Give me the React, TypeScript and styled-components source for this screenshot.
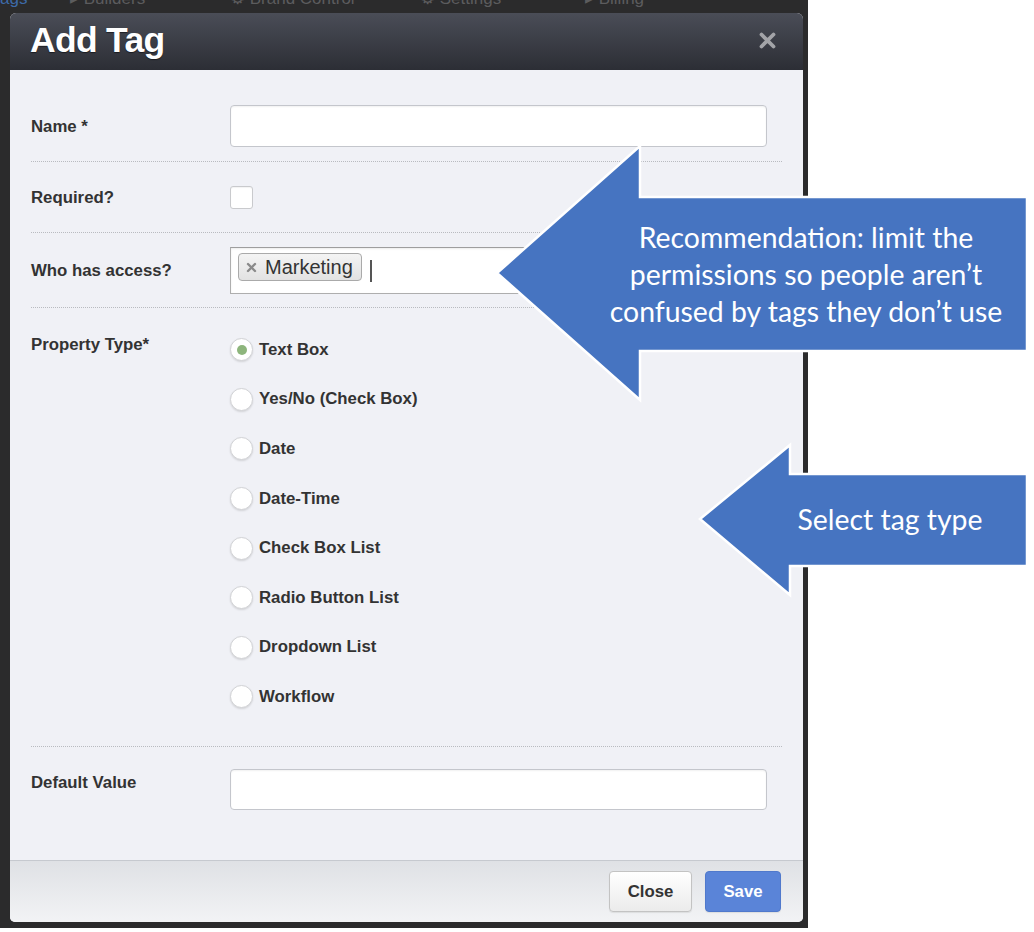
import React from "react";
import styled, { createGlobalStyle } from "styled-components";

const Global = createGlobalStyle`
  html, body { margin: 0; padding: 0; background: #ffffff; }
  body { font-family: "Liberation Sans", Arial, sans-serif; }
  * { box-sizing: border-box; }
`;

const Page = styled.div`
  position: relative;
  width: 1034px;
  height: 932px;
  background: #ffffff;
  overflow: hidden;
`;

const Frame = styled.div`
  width: 808px;
  height: 928px;
  background: #2b2b2c;
  display: flex;
  flex-direction: column;
`;

const NavStrip = styled.div`
  height: 13px;
  overflow: hidden;
`;

const NavRow = styled.div`
  display: flex;
  align-items: center;
  margin-top: -11px;
  height: 20px;
`;

const NavItem = styled.span<{ $w: number; $blue?: boolean }>`
  width: ${(p) => p.$w}px;
  font-size: 17px;
  line-height: 20px;
  color: ${(p) => (p.$blue ? "#3d6aa8" : "#5c5c5e")};
  white-space: nowrap;
`;

const Modal = styled.div`
  margin: 0 5px 0 10px;
  height: 909px;
  border-radius: 6px 6px 5px 5px;
  overflow: hidden;
  display: flex;
  flex-direction: column;
  background: #f0f1f6;
`;

const Header = styled.div`
  height: 57px;
  flex: none;
  display: flex;
  align-items: center;
  justify-content: space-between;
  padding: 0 26px 0 20px;
  background: linear-gradient(#4a4d57, #2c2e35);
`;

const Title = styled.h1`
  margin: 0;
  margin-top: -3px;
  font-size: 35.5px;
  letter-spacing: -0.7px;
  font-weight: 700;
  color: #ffffff;
  text-shadow: 0 1px 1px rgba(0, 0, 0, 0.5);
`;

const CloseX = styled.svg`
  width: 19px;
  height: 19px;
  margin-top: -2px;
`;

const Body = styled.div`
  flex: 1;
  padding: 35px 21px 0;
`;

const Row = styled.div<{ $pad: string; $align?: string; $divider?: boolean }>`
  display: flex;
  align-items: ${(p) => p.$align ?? "center"};
  padding: ${(p) => p.$pad};
  border-bottom: ${(p) => (p.$divider === false ? "none" : "1px dotted #b9bbc0")};
`;

const Label = styled.div<{ $top?: number }>`
  width: 199px;
  flex: none;
  font-size: 16.8px;
  line-height: 19px;
  font-weight: 700;
  color: #333333;
  margin-top: ${(p) => p.$top ?? 0}px;
`;

const TextInput = styled.div<{ $h?: number }>`
  width: 537px;
  height: ${(p) => p.$h ?? 42}px;
  background: #ffffff;
  border: 1px solid #c4c6cc;
  border-radius: 4px;
  box-shadow: inset 0 1px 2px rgba(0, 0, 0, 0.06);
`;

const CheckBox = styled.div`
  width: 23px;
  height: 23px;
  background: #ffffff;
  border: 1px solid #c9cacd;
  border-radius: 3px;
  box-shadow: inset 0 1px 1px rgba(0, 0, 0, 0.05);
`;

const CheckSlot = styled.div`
  height: 42px;
  display: flex;
  align-items: center;
`;

const TagInput = styled.div`
  width: 537px;
  height: 47px;
  background: #ffffff;
  border: 1px solid #aeaeae;
  border-top-color: #9e9e9e;
  display: flex;
  align-items: flex-start;
  padding: 5px 7px;
  box-shadow: inset 0 1px 2px rgba(0, 0, 0, 0.08);
`;

const Chip = styled.div`
  height: 28px;
  display: flex;
  align-items: center;
  gap: 8px;
  padding: 0 8px 0 7px;
  border: 1px solid #aaaaaa;
  border-radius: 4px;
  background: linear-gradient(#f4f4f4, #e2e2e2);
  font-size: 20px;
  color: #333333;
`;

const ChipX = styled.svg`
  width: 11px;
  height: 11px;
`;

const Caret = styled.div`
  width: 2px;
  height: 22px;
  background: #555555;
  margin: 7px 0 0 8px;
`;

const RadioList = styled.div`
  display: flex;
  flex-direction: column;
`;

const RadioItem = styled.div`
  height: 49.6px;
  display: flex;
  align-items: center;
  gap: 6px;
  font-size: 16.8px;
  font-weight: 700;
  color: #333333;
`;

const Radio = styled.div<{ $on?: boolean }>`
  width: 23px;
  height: 23px;
  border-radius: 50%;
  background: #ffffff;
  border: 1px solid #d2d3d6;
  box-shadow: 0 1px 2px rgba(0, 0, 0, 0.12);
  display: flex;
  align-items: center;
  justify-content: center;
  &::after {
    content: "";
    width: 10px;
    height: 10px;
    border-radius: 50%;
    background: ${(p) => (p.$on ? "#8db57c" : "transparent")};
  }
`;

const Footer = styled.div`
  height: 62px;
  flex: none;
  border-top: 1px solid #c6c9cf;
  background: linear-gradient(#dfe1e5, #f2f3f5);
  display: flex;
  justify-content: flex-end;
  align-items: flex-start;
  gap: 13px;
  padding: 10px 22px 0;
`;

const Button = styled.button<{ $primary?: boolean }>`
  height: 41px;
  width: ${(p) => (p.$primary ? 76 : 83)}px;
  padding: 0;
  border-radius: 4px;
  font-family: "Liberation Sans", Arial, sans-serif;
  font-size: 16.8px;
  font-weight: 700;
  cursor: pointer;
  color: ${(p) => (p.$primary ? "#ffffff" : "#333333")};
  background: ${(p) =>
    p.$primary ? "#5a84d8" : "linear-gradient(#ffffff, #ebebeb)"};
  border: 1px solid ${(p) => (p.$primary ? "#5079cc" : "#c3c3c3")};
  box-shadow: 0 1px 1px rgba(0, 0, 0, 0.08);
`;

const Overlay = styled.svg`
  position: absolute;
  left: 0;
  top: 0;
  pointer-events: none;
`;

const Callout = styled.div<{ $cx: number; $cy: number; $size: number }>`
  position: absolute;
  left: ${(p) => p.$cx - 250}px;
  top: ${(p) => p.$cy}px;
  width: 500px;
  transform: translateY(-50%);
  text-align: center;
  color: #ffffff;
  font-family: Lato, "Open Sans", sans-serif;
  font-size: ${(p) => p.$size}px;
  line-height: 37px;
  pointer-events: none;
`;

const radios = [
  "Text Box",
  "Yes/No (Check Box)",
  "Date",
  "Date-Time",
  "Check Box List",
  "Radio Button List",
  "Dropdown List",
  "Workflow",
];

export default function App() {
  return (
    <Page>
      <Global />
      <Frame>
        <NavStrip>
          <NavRow>
            <NavItem $w={70} $blue>ags</NavItem>
            <NavItem $w={160}>▸ Builders</NavItem>
            <NavItem $w={190}>⚙ Brand Control</NavItem>
            <NavItem $w={165}>⚙ Settings</NavItem>
            <NavItem $w={120}>▸ Billing</NavItem>
          </NavRow>
        </NavStrip>
        <Modal>
          <Header>
            <Title>Add Tag</Title>
            <CloseX viewBox="0 0 19 19">
              <path
                d="M3.5 3.5 L15.5 15.5 M15.5 3.5 L3.5 15.5"
                stroke="#a3a4a8"
                strokeWidth="3.8"
                strokeLinecap="round"
              />
            </CloseX>
          </Header>
          <Body>
            <Row $pad="0 0 14px">
              <Label>Name *</Label>
              <TextInput />
            </Row>
            <Row $pad="14px 0 14px">
              <Label>Required?</Label>
              <CheckSlot>
                <CheckBox />
              </CheckSlot>
            </Row>
            <Row $pad="14px 0 13px">
              <Label>Who has access?</Label>
              <TagInput>
                <Chip>
                  <ChipX viewBox="0 0 11 11">
                    <path
                      d="M2 2 L9 9 M9 2 L2 9"
                      stroke="#8a8a8a"
                      strokeWidth="2.4"
                      strokeLinecap="round"
                    />
                  </ChipX>
                  <span>Marketing</span>
                </Chip>
                <Caret />
              </TagInput>
            </Row>
            <Row $pad="17px 0 24px" $align="flex-start">
              <Label $top={10}>Property Type*</Label>
              <RadioList>
                {radios.map((r, i) => (
                  <RadioItem key={r}>
                    <Radio $on={i === 0} />
                    {r}
                  </RadioItem>
                ))}
              </RadioList>
            </Row>
            <Row $pad="22px 0 0" $align="flex-start" $divider={false}>
              <Label $top={4}>Default Value</Label>
              <TextInput $h={41} />
            </Row>
          </Body>
          <Footer>
            <Button>Close</Button>
            <Button $primary>Save</Button>
          </Footer>
        </Modal>
      </Frame>

      <Overlay width="1034" height="932" viewBox="0 0 1034 932">
        <polygon
          points="497,273 640,146 640,197 1027,197 1027,351 640,351 640,400"
          fill="#4674c1"
          stroke="#ffffff"
          strokeWidth="2.5"
        />
        <polygon
          points="700,519 790,445 790,474 1027,474 1027,566 790,566 790,595"
          fill="#4674c1"
          stroke="#ffffff"
          strokeWidth="2.5"
        />
      </Overlay>
      <Callout $cx={806} $cy={274} $size={28.4}>
        Recommendation: limit the
        <br />
        permissions so people aren’t
        <br />
        confused by tags they don’t use
      </Callout>
      <Callout $cx={890} $cy={519} $size={28.4}>
        Select tag type
      </Callout>
    </Page>
  );
}
